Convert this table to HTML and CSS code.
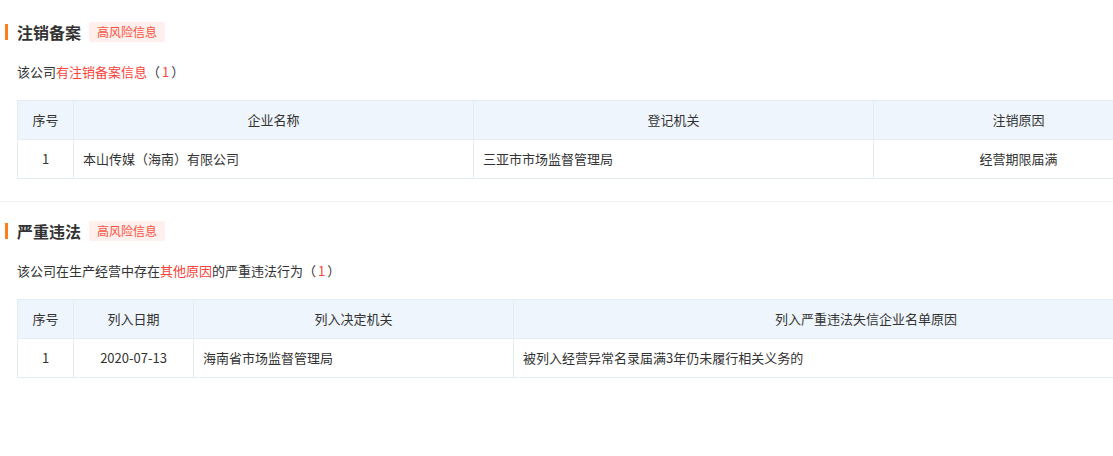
FILE: index.html
```html
<!DOCTYPE html>
<html lang="zh-CN">
<head>
<meta charset="utf-8">
<title>注销备案 / 严重违法</title>
<link rel="stylesheet" href="styles.css">
</head>
<body>
<div class="page">
  <section class="section section-first">
    <div class="title-row">
      <span class="bar"></span>
      <h2 class="title">注销备案</h2>
      <span class="badge">高风险信息</span>
    </div>
    <p class="desc">该公司<span class="hl">有注销备案信息</span>（<span class="hl num">1</span>）</p>
    <table class="grid grid-a">
      <colgroup>
        <col class="c-idx"><col class="c-400"><col class="c-400"><col class="c-rest-a">
      </colgroup>
      <thead>
        <tr><th>序号</th><th>企业名称</th><th>登记机关</th><th>注销原因</th></tr>
      </thead>
      <tbody>
        <tr><td class="center">1</td><td>本山传媒（海南）有限公司</td><td>三亚市市场监督管理局</td><td class="center">经营期限届满</td></tr>
      </tbody>
    </table>
  </section>
  <section class="section section-second">
    <div class="title-row">
      <span class="bar"></span>
      <h2 class="title">严重违法</h2>
      <span class="badge">高风险信息</span>
    </div>
    <p class="desc">该公司在生产经营中存在<span class="hl">其他原因</span>的严重违法行为（<span class="hl num">1</span>）</p>
    <table class="grid grid-b">
      <colgroup>
        <col class="c-idx"><col class="c-120"><col class="c-320"><col class="c-rest-b">
      </colgroup>
      <thead>
        <tr><th>序号</th><th>列入日期</th><th>列入决定机关</th><th>列入严重违法失信企业名单原因</th></tr>
      </thead>
      <tbody>
        <tr><td class="center">1</td><td class="center">2020-07-13</td><td>海南省市场监督管理局</td><td>被列入经营异常名录届满3年仍未履行相关义务的</td></tr>
      </tbody>
    </table>
  </section>
</div>
</body>
</html>
```

FILE: styles.css
```css
html, body {
  margin: 0;
  padding: 0;
  background: #fff;
  overflow: hidden;
}
body {
  font-family: "Noto Sans CJK SC", "Microsoft YaHei", "Noto Sans", sans-serif;
  color: #333;
  font-size: 13px;
}
.page {
  width: 1113px;
  overflow: hidden;
}
.section {
  padding: 22px 0 0 0;
}
.section-first {
  padding-bottom: 22px;
  border-bottom: 1px solid #f0f0f0;
}
.section-second {
  padding-top: 19px;
}
.title-row {
  display: flex;
  align-items: center;
  height: 20px;
  padding-left: 5px;
}
.bar {
  width: 3px;
  height: 16px;
  background: #ff7e1c;
  margin-right: 9px;
  flex: none;
}
.title {
  margin: 0;
  font-size: 16px;
  font-weight: bold;
  color: #333;
  line-height: 20px;
}
.badge {
  margin-left: 8px;
  height: 20px;
  line-height: 20px;
  padding: 0 8px;
  font-size: 12px;
  color: #f8523f;
  background: #ffefed;
  border-radius: 2px;
}
.desc {
  margin: 21px 0 0 17px;
  line-height: 18px;
  font-size: 13px;
  color: #333;
}
.hl {
  color: #f8443a;
}
.num {
  padding: 0 2px;
}
.grid {
  margin: 19px 0 0 17px;
  border-collapse: collapse;
  table-layout: fixed;
  font-size: 13px;
}
.grid-a { width: 1147px; }
.grid-b { width: 1202px; }
.c-idx { width: 56px; }
.c-400 { width: 400px; }
.c-120 { width: 120px; }
.c-320 { width: 320px; }
.grid th, .grid td {
  border: 1px solid #e4ecf4;
  height: 39px;
  padding: 0 9px;
  box-sizing: border-box;
  color: #333;
  line-height: 18px;
  white-space: nowrap;
}
.grid th {
  background: #eef5fc;
  font-weight: normal;
  text-align: center;
}
.grid td {
  text-align: left;
}
.grid td.center {
  text-align: center;
}
```
